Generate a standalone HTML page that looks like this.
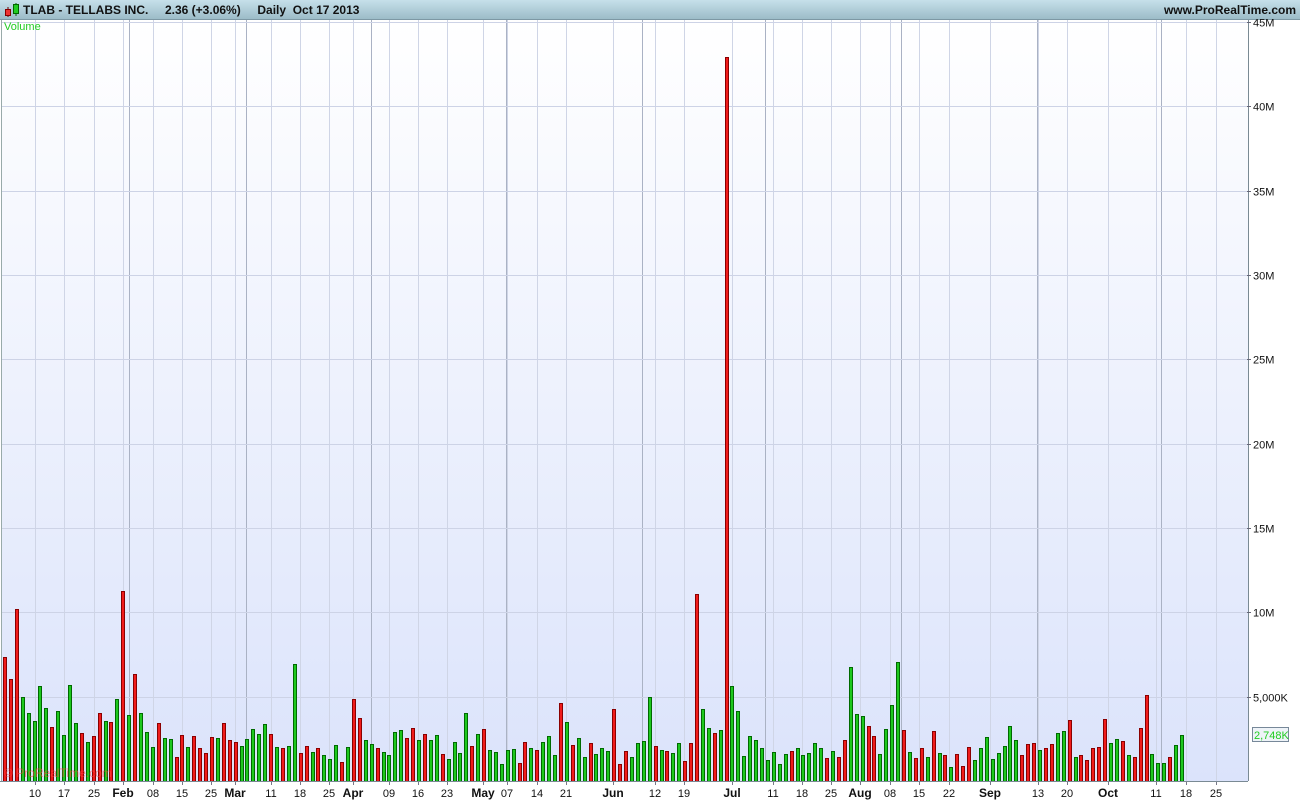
<!DOCTYPE html>
<html><head><meta charset="utf-8"><style>
body{margin:0;width:1300px;height:800px;overflow:hidden;background:#fff;font-family:"Liberation Sans",sans-serif;}
#hdr{position:absolute;left:0;top:0;width:1300px;height:19px;background:linear-gradient(#c6e0ea,#9cbcc8);border-bottom:1px solid #7d98a4;}
#plot{position:absolute;left:1px;top:20px;width:1246px;height:761px;background:linear-gradient(#ffffff,#dbe3fb);border-left:1px solid #9aa;border-right:1px solid #7a8a94;}
</style></head><body>
<div id="hdr">
<svg width="20" height="19" style="position:absolute;left:3px;top:0"><line x1="5" y1="7" x2="5" y2="17" stroke="#600"/><rect x="2.5" y="9.5" width="5" height="6" fill="#e33" stroke="#800"/><line x1="13" y1="3" x2="13" y2="16" stroke="#060"/><rect x="10.5" y="4.5" width="5" height="9" fill="#2c2" stroke="#060"/></svg>
<span style="position:absolute;left:23px;top:3px;font-size:12px;font-weight:bold;color:#111">TLAB - TELLABS INC.&nbsp;&nbsp;&nbsp;&nbsp;&nbsp;2.36 (+3.06%)&nbsp;&nbsp;&nbsp;&nbsp;&nbsp;Daily&nbsp;&nbsp;Oct 17 2013</span>
<span style="position:absolute;right:4px;top:3px;font-size:12px;font-weight:bold;color:#111">www.ProRealTime.com</span>
</div>
<div id="plot"></div>
<svg id="s" width="1300" height="800" style="position:absolute;left:0;top:0"></svg>
<div style="position:absolute;left:4px;top:21px;font-size:11px;color:#2c2">Volume</div>
<div style="position:absolute;left:4px;top:766px;font-size:12px;color:#f44;opacity:.6">© ProRealTime.com</div>
<script>
var H=[124,102,172,84,68,60,95,73,54,70,46,96,58,48,39,45,68,60,59,82,190,66,107,68,49,34,58,43,42,24,46,34,45,33,28,44,43,58,41,39,35,42,52,47,57,47,34,33,35,117,28,35,29,33,26,22,
36,19,34,82,63,41,37,33,29,26,49,51,43,53,41,47,41,46,27,22,39,28,68,35,47,52,31,29,17,31,32,18,39,33,31,39,45,26,78,59,36,43,24,38,27,33,30,72,17,
30,24,38,40,84,35,31,30,28,38,20,38,187,72,53,48,51,724,95,70,25,45,41,33,21,29,17,27,30,33,26,28,38,33,23,30,24,41,114,67,65,55,45,27,52,76,119,51,
29,23,33,24,50,28,26,14,27,15,34,21,33,44,22,28,35,55,41,26,37,38,31,33,37,48,50,61,24,26,21,33,34,62,38,42,40,26,24,53,86,27,18,18,24,36,46];
var C="RRRGGGGGRGGGGRGRRGRGRGRGGGRGGRRGRRRRGRRRGGGGGRGRGGRRGRGG"+
"GRGRRGGRGGGGRRGRGGRGGGGRGRGGGGGRRGRGGGRGRGGRGGGRR"+
"RGGGGRGRGGRRRGGRGRGGGGGGGGGGRGGGGGRGRRGGGRRGGGGR"+
"GRRGRGRGRRRGGGGGGGGRRRGRRGGRGRRRRRGGRGRRRGGGRGG";
var s='';function L(x1,y1,x2,y2,c){s+='<line x1="'+x1+'" y1="'+y1+'" x2="'+x2+'" y2="'+y2+'" stroke="'+c+'" stroke-width="1"/>';}
var wk=[35,64,94,123,153,182,211,235,271,300,329,353,389,418,447,483,507,537,566,613,655,684,732,773,802,831,860,890,919,949,990,1038,1067,1108,1156,1186,1216];
wk.forEach(function(x){L(x+.5,20,x+.5,781,'#cfd5e6');L(x+.5,781,x+.5,785,'#778');});
[129,246,371,506,642,765,901,1037,1161].forEach(function(x){L(x+.5,20,x+.5,781,'#aab2c4');});
var labs=['5,000K','10M','15M','20M','25M','30M','35M','40M','45M'];
for(var k=1;k<=9;k++){var y=Math.round(781-k*5*16.87)+.5;L(2,y,1247,y,'#cdd3e6');L(1247,y,1251,y,'#667');
s+='<text x="1253" y="'+(y+4)+'" font-size="11" fill="#111">'+labs[k-1]+'</text>';}
var N=H.length,sp=(1180-3)/(N-1);
for(var i=0;i<N;i++){var x=Math.round(3+i*sp),h=H[i],r=C[i]!=='G';
s+='<rect x="'+(x+.5)+'" y="'+(781-h+.5)+'" width="3" height="'+h+'" fill="'+(r?'#f01c1c':'#1ec81e')+'" stroke="'+(r?'#8a0000':'#006a00')+'"/>';}
L(0,781.5,1248,781.5,'#7a8a94');
var xl=[['10',35],['17',64],['25',94],['Feb',123,1],['08',153],['15',182],['25',211],['Mar',235,1],['11',271],['18',300],['25',329],['Apr',353,1],['09',389],['16',418],['23',447],['May',483,1],['07',507],['14',537],['21',566],['Jun',613,1],['12',655],['19',684],['Jul',732,1],['11',773],['18',802],['25',831],['Aug',860,1],['08',890],['15',919],['22',949],['Sep',990,1],['13',1038],['20',1067],['Oct',1108,1],['11',1156],['18',1186],['25',1216]];
xl.forEach(function(a){s+='<text x="'+a[1]+'" y="797" text-anchor="middle" font-size="'+(a[2]?12:11)+'" '+(a[2]?'font-weight="bold"':'')+' fill="#111">'+a[0]+'</text>';});
s+='<rect x="1252.5" y="727.5" width="36" height="14" fill="#eef3f8" stroke="#789"/><text x="1254" y="739" font-size="11" fill="#2c2">2,748K</text>';
document.getElementById('s').innerHTML=s;
</script>
</body></html>
